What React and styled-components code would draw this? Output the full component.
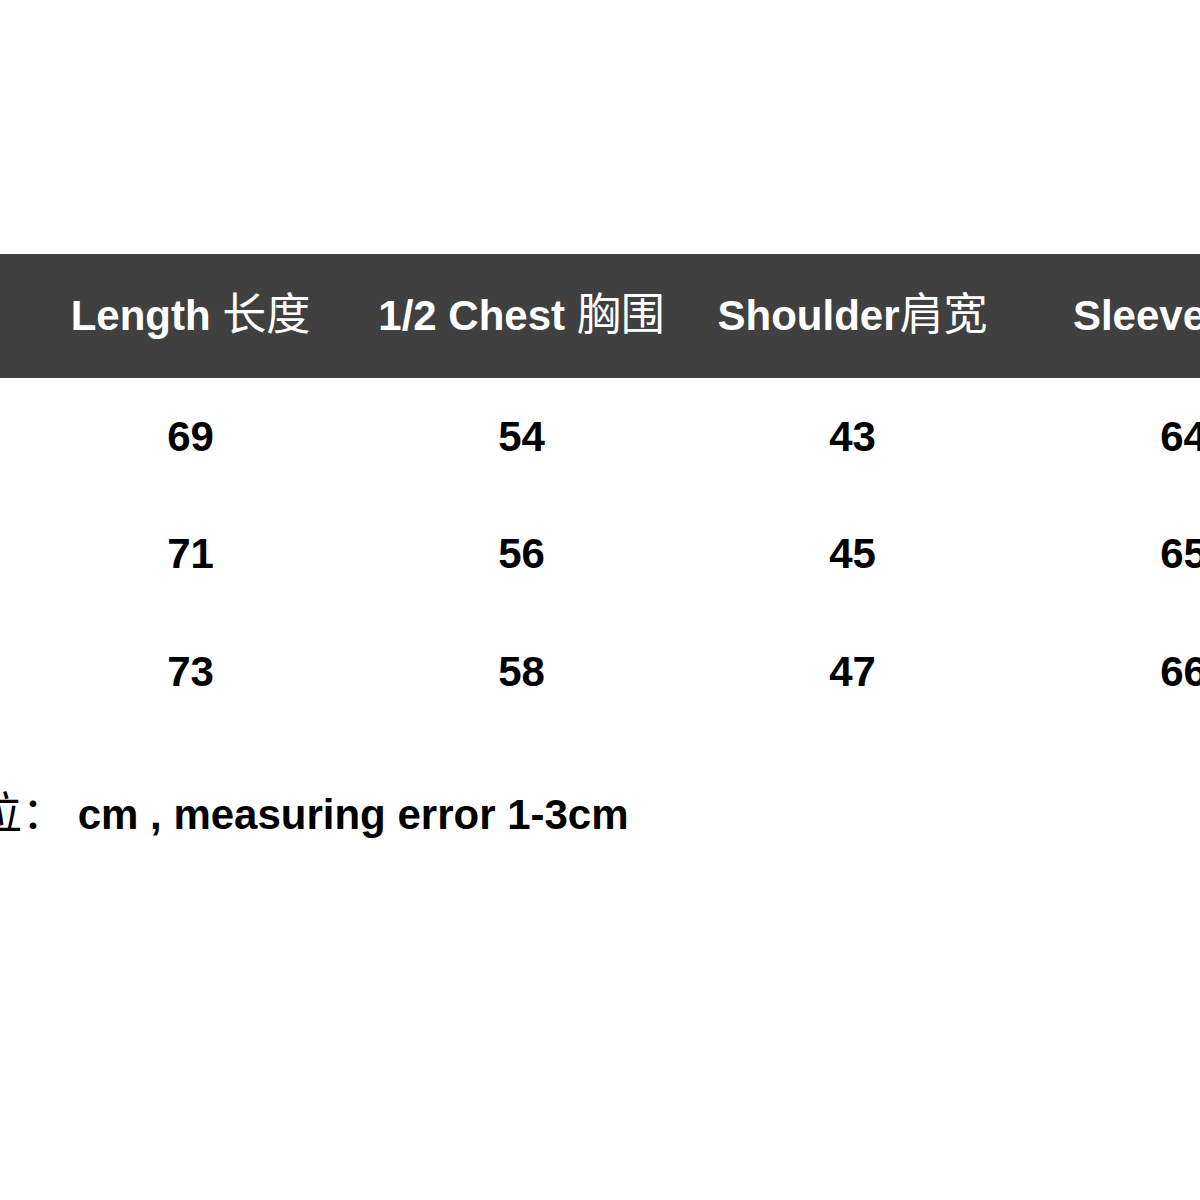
import React from "react";
import styled, { createGlobalStyle } from "styled-components";

const GlobalStyle = createGlobalStyle`
  html, body {
    margin: 0;
    padding: 0;
    background: #ffffff;
  }
`;

const Page = styled.div`
  width: 1200px;
  height: 1200px;
  overflow: hidden;
  background: #ffffff;
  padding-top: 254px;
  box-sizing: border-box;
  font-family: "Liberation Sans", Arial, "Noto Sans CJK SC", sans-serif;
  font-weight: 700;
`;

const Row = styled.div`
  display: grid;
  grid-template-columns: repeat(4, 331px);
  padding-left: 25px;
  padding-bottom: ${(p) => (p.$header ? "6px" : "0")};
  box-sizing: border-box;
  align-items: center;
  height: ${(p) => (p.$header ? "124px" : "117.5px")};
  background: ${(p) => (p.$header ? "#404040" : "transparent")};
  color: ${(p) => (p.$header ? "#ffffff" : "#000000")};
`;

const Cell = styled.div`
  text-align: center;
  white-space: nowrap;
  font-size: 42px;
  line-height: 48px;
`;

const Cjk = styled.span`
  font-family: "Noto Sans CJK SC", sans-serif;
  font-weight: 400;
  font-size: 44px;
`;

const Note = styled.div`
  margin-top: 55px;
  margin-left: -66px;
  font-size: 42px;
  line-height: 48px;
  white-space: nowrap;
  color: #000000;
`;

const headers = [
  ["Length ", "长度"],
  ["1/2 Chest ", "胸围"],
  ["Shoulder", "肩宽"],
  ["Sleeve", "袖长"],
];

const rows = [
  [69, 54, 43, 64],
  [71, 56, 45, 65],
  [73, 58, 47, 66],
];

export default function App() {
  return (
    <>
      <GlobalStyle />
      <Page>
        <Row $header>
          {headers.map(([en, zh]) => (
            <Cell key={en}>
              {en}
              <Cjk>{zh}</Cjk>
            </Cell>
          ))}
        </Row>
        {rows.map((r, i) => (
          <Row key={i}>
            {r.map((v, j) => (
              <Cell key={j}>{v}</Cell>
            ))}
          </Row>
        ))}
        <Note>
          <Cjk>单位：</Cjk> cm , measuring error 1-3cm
        </Note>
      </Page>
    </>
  );
}
